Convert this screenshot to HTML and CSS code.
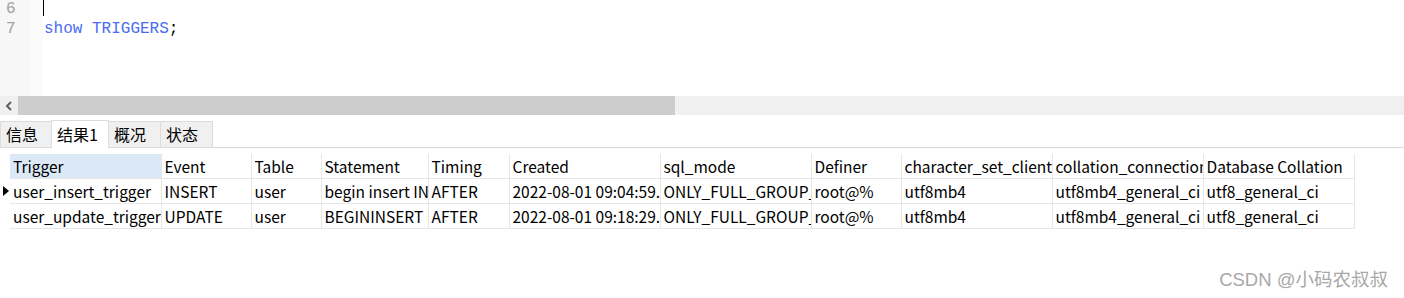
FILE: index.html
```html
<!DOCTYPE html>
<html lang="zh">
<head>
    <meta charset="UTF-8">
    <link rel="stylesheet" href="styles.css">
    <title>show TRIGGERS</title>
</head>
<body>

    <div class="editor">
        <div class="gutter">
            <div class="line-no">6</div>
            <div class="line-no">7</div>
        </div>
        <div class="gutter-edge"></div>
        <div class="code">
            <div class="code-line"><span class="caret"></span></div>
            <div class="code-line"><span class="kw">show TRIGGERS</span>;</div>
        </div>
    </div>

    <div class="hscroll">
        <div class="arrow">
            <svg width="8" height="10" viewBox="0 0 8 10"><path d="M6 1 L2 5 L6 9" fill="none" stroke="#606060" stroke-width="2"/></svg>
        </div>
        <div class="thumb"></div>
        <div class="track"></div>
    </div>

    <div class="tabs">
        <div class="tab t1">信息</div>
        <div class="tab active">结果1</div>
        <div class="tab t3">概况</div>
        <div class="tab t4">状态</div>
    </div>

    <div class="grid">
        <div class="indicator-col">
            <div class="ind-cell head"></div>
            <div class="ind-cell"><span class="pointer"></span></div>
            <div class="ind-cell"></div>
        </div>
        <table>
            <colgroup>
                <col style="width:151px">
                <col style="width:90px">
                <col style="width:70px">
                <col style="width:107px">
                <col style="width:81px">
                <col style="width:151px">
                <col style="width:151px">
                <col style="width:90px">
                <col style="width:151px">
                <col style="width:151px">
                <col style="width:151px">
            </colgroup>
            <thead>
                <tr>
                    <th class="sel"><div class="cell">Trigger</div></th>
                    <th><div class="cell">Event</div></th>
                    <th><div class="cell">Table</div></th>
                    <th><div class="cell">Statement</div></th>
                    <th><div class="cell">Timing</div></th>
                    <th><div class="cell">Created</div></th>
                    <th><div class="cell">sql_mode</div></th>
                    <th><div class="cell">Definer</div></th>
                    <th><div class="cell">character_set_client</div></th>
                    <th><div class="cell">collation_connection</div></th>
                    <th><div class="cell">Database Collation</div></th>
                </tr>
            </thead>
            <tbody>
                <tr>
                    <td><div class="cell">user_insert_trigger</div></td>
                    <td><div class="cell">INSERT</div></td>
                    <td><div class="cell">user</div></td>
                    <td><div class="cell">begin insert INTO user_log</div></td>
                    <td><div class="cell">AFTER</div></td>
                    <td><div class="cell">2022-08-01 09:04:59.12</div></td>
                    <td><div class="cell">ONLY_FULL_GROUP_BY</div></td>
                    <td><div class="cell">root@%</div></td>
                    <td><div class="cell">utf8mb4</div></td>
                    <td><div class="cell">utf8mb4_general_ci</div></td>
                    <td><div class="cell">utf8_general_ci</div></td>
                </tr>
                <tr>
                    <td><div class="cell">user_update_trigger</div></td>
                    <td><div class="cell">UPDATE</div></td>
                    <td><div class="cell">user</div></td>
                    <td><div class="cell">BEGININSERT INTO user_log</div></td>
                    <td><div class="cell">AFTER</div></td>
                    <td><div class="cell">2022-08-01 09:18:29.45</div></td>
                    <td><div class="cell">ONLY_FULL_GROUP_BY</div></td>
                    <td><div class="cell">root@%</div></td>
                    <td><div class="cell">utf8mb4</div></td>
                    <td><div class="cell">utf8mb4_general_ci</div></td>
                    <td><div class="cell">utf8_general_ci</div></td>
                </tr>
            </tbody>
        </table>
    </div>

    <div class="watermark">CSDN @小码农叔叔</div>

</body>
</html>
```

FILE: styles.css
```css
body {
    margin: 0;
    background-color: #fff;
    font-family: "Noto Sans CJK SC", "Noto Sans", sans-serif;
    color: #000;
    width: 1404px;
    height: 298px;
    overflow: hidden;
}

/* editeur */
.editor {
    display: flex;
    height: 96px;
}

.gutter {
    width: 31px;
    background-color: #f7f7f7;
    font-family: "Liberation Mono", monospace;
    font-size: 16px;
    color: #a0a0a0;
}

.gutter-edge {
    width: 12px;
    background-color: #fbfbfb;
}

.line-no {
    height: 20px;
    line-height: 18px;
    padding-left: 6px;
}

.code {
    flex: 1;
    font-family: "Liberation Mono", monospace;
    font-size: 16px;
    padding-left: 1px;
}

.code-line {
    height: 20px;
    line-height: 19px;
}

.caret {
    display: inline-block;
    width: 1px;
    height: 16px;
    background-color: #000;
    margin-left: -1px;
    vertical-align: top;
}

.kw {
    color: #4a6cf2;
}

/* barre de défilement */
.hscroll {
    display: flex;
    height: 19px;
    background-color: #f0f0f0;
}

.arrow {
    width: 18px;
    display: flex;
    align-items: center;
    justify-content: center;
}

.thumb {
    width: 657px;
    background-color: #cdcdcd;
}

.track {
    flex: 1;
}

/* onglets */
.tabs {
    display: flex;
    align-items: flex-end;
    height: 33px;
    border-bottom: 1px solid #d9d9d9;
    box-sizing: border-box;
}

.tab {
    box-sizing: border-box;
    height: 26px;
    line-height: 25px;
    font-size: 16px;
    padding-left: 5px;
    background-color: #f0f0f0;
    border: 1px solid #dcdcdc;
    border-bottom: none;
    margin-right: -1px;
}

.t1 {
    width: 52px;
}

.tab.active {
    background-color: #fff;
    width: 58px;
    height: 28px;
    margin-bottom: -1px;
    line-height: 27px;
}

.t3, .t4 {
    width: 53px;
}

/* grille */
.grid {
    display: flex;
    margin-top: 6px;
}

.indicator-col {
    width: 10px;
}

.ind-cell {
    height: 25px;
    display: flex;
    align-items: center;
}

.ind-cell.head {
    height: 24px;
}

.pointer {
    width: 0;
    height: 0;
    border-top: 5px solid transparent;
    border-bottom: 5px solid transparent;
    border-left: 6px solid #000;
    margin-left: 3px;
}

table {
    border-collapse: collapse;
    table-layout: fixed;
    width: 1344px;
}

th, td {
    font-size: 15.5px;
    font-weight: normal;
    text-align: left;
    padding: 0;
    border: 1px solid #e6e6e6;
    border-top: none;
    height: 24px;
}

th {
    border-left-color: #ececec;
}

th.sel {
    background-color: #dbe9f7;
}

.cell {
    white-space: nowrap;
    overflow: hidden;
    line-height: 24px;
    padding-left: 3px;
}

td:first-child, th:first-child {
    border-left: none;
}

.watermark {
    position: absolute;
    right: 16px;
    top: 265px;
    font-size: 18.5px;
    color: #a8a8a8;
    font-family: "Liberation Sans", "Noto Sans CJK SC", sans-serif;
}
```
